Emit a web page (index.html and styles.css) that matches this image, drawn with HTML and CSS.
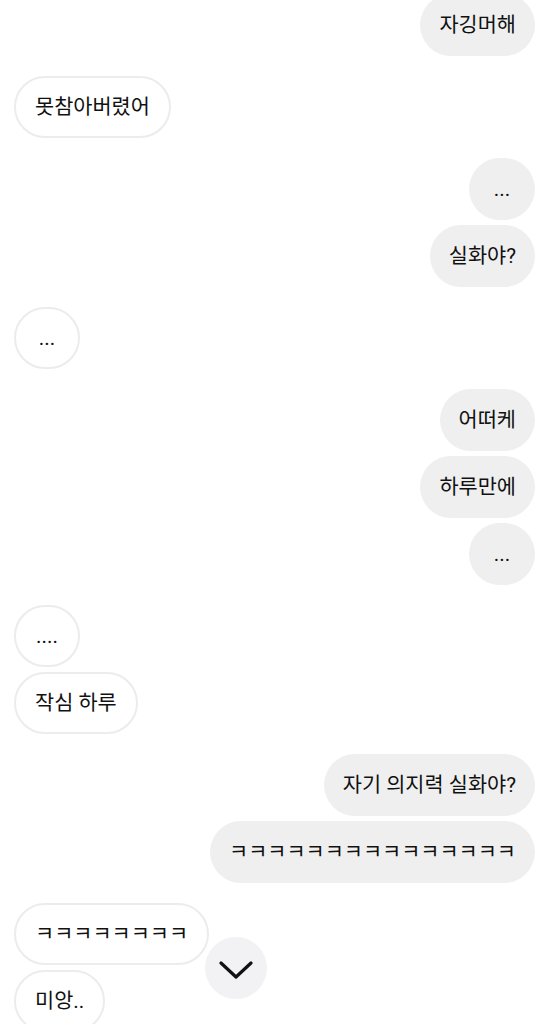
FILE: index.html
```html
<!DOCTYPE html>
<html lang="ko">
<head>
    <meta charset="UTF-8">
    <meta name="viewport" content="width=device-width, initial-scale=1.0">
    <title>채팅</title>
    <link rel="stylesheet" href="styles.css">
</head>
<body>
   <main class="chat">
     <div class="group me">
        <p class="bubble">자깅머해</p>
     </div>
     <div class="group you">
        <p class="bubble">못참아버렸어</p>
     </div>
     <div class="group me">
        <p class="bubble">...</p>
        <p class="bubble">실화야?</p>
     </div>
     <div class="group you">
        <p class="bubble">...</p>
     </div>
     <div class="group me">
        <p class="bubble">어떠케</p>
        <p class="bubble">하루만에</p>
        <p class="bubble">...</p>
     </div>
     <div class="group you">
        <p class="bubble">....</p>
        <p class="bubble">작심 하루</p>
     </div>
     <div class="group me">
        <p class="bubble">자기 의지력 실화야?</p>
        <p class="bubble">ㅋㅋㅋㅋㅋㅋㅋㅋㅋㅋㅋㅋㅋㅋㅋ</p>
     </div>
     <div class="group you">
        <p class="bubble">ㅋㅋㅋㅋㅋㅋㅋㅋ</p>
        <p class="bubble">미앙..</p>
     </div>
   </main>
   <button class="scroll-btn" aria-label="아래로">
      <svg width="34" height="20" viewBox="0 0 34 20">
         <path d="M2 3 L17 17 L32 3" fill="none" stroke="#111" stroke-width="3.2" stroke-linecap="round" stroke-linejoin="round"/>
      </svg>
   </button>
</body>
</html>
```

FILE: styles.css
```css
*{
    margin: 0;
    padding: 0;
    box-sizing: border-box;
}
html, body{
    height: 100%;
    overflow: hidden;
}
body{
    background-color: #fff;
    font-family: Roboto, "Noto Sans CJK KR", sans-serif;
    color: #111;
    position: relative;
}
.chat{
    display: flex;
    flex-direction: column;
    gap: 20px;
    padding: 0 13px 0 14px;
    margin-top: -6px;
}
.group{
    display: flex;
    flex-direction: column;
    gap: 5px;
}
.me{
    align-items: flex-end;
}
.you{
    align-items: flex-start;
}
.bubble{
    height: 62px;
    min-width: 66px;
    padding: 0 19px;
    border-radius: 31px;
    font-size: 20.8px;
    line-height: 62px;
    text-align: center;
    white-space: nowrap;
}
.me .bubble{
    background-color: #efefef;
}
.you .bubble{
    border: 2px solid #ececec;
    line-height: 58px;
}
.scroll-btn{
    position: absolute;
    left: 205px;
    top: 937px;
    width: 62px;
    height: 62px;
    border-radius: 50%;
    border: none;
    background-color: #f2f2f4;
    display: flex;
    justify-content: center;
    align-items: center;
    padding-top: 4px;
}
```
